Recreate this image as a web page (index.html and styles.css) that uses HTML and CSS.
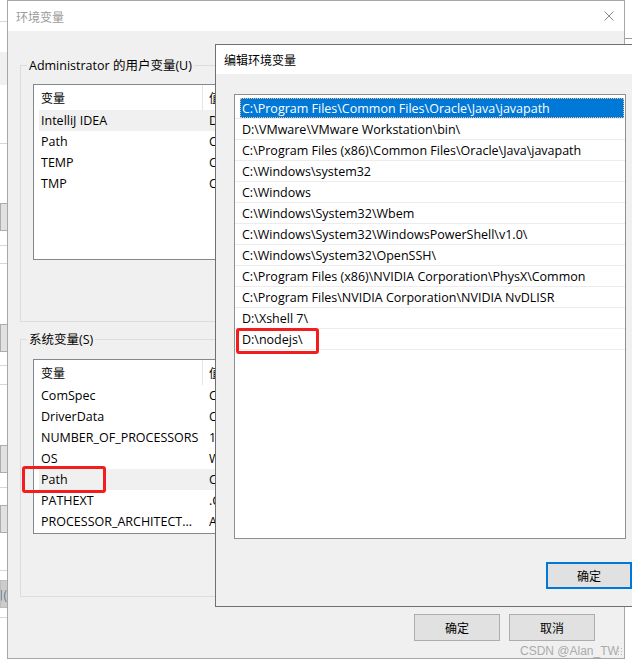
FILE: index.html
```html
<!DOCTYPE html>
<html lang="zh-CN">
<head>
<meta charset="utf-8">
<title>编辑环境变量</title>
<link rel="stylesheet" href="styles.css">
</head>
<body>
<div class="desktop">
  <div class="bg-left">
    <div class="bg-line mt-21"></div>
    <div class="bg-band mt-30"></div>
    <div class="bg-line mt-58"></div>
    <div class="bg-btn mt-59"></div>
    <div class="bg-line mt-14"></div>
    <div class="bg-line mt-17"></div>
    <div class="bg-btn mt-60"></div>
    <div class="bg-line mt-13"></div>
    <div class="bg-line mt-18"></div>
    <div class="bg-btn mt-60"></div>
    <div class="bg-line mt-14"></div>
    <div class="bg-btn mt-17"></div>
    <div class="bg-line mt-37"></div>
    <div class="bg-btn dark mt-9"><span>启用(</span></div>
    <div class="bg-line mt-9"></div>
  </div>
  <div class="bg-right-line"></div>

  <div class="win outer">
    <div class="titlebar">
      <span class="title">环境变量</span>
      <svg class="close" width="10" height="10" viewBox="0 0 10 10"><path d="M0.5 0.5L9.5 9.5M9.5 0.5L0.5 9.5" stroke="#8c8c8c" stroke-width="1" fill="none"/></svg>
    </div>
    <div class="body">
      <fieldset class="group group-user">
        <legend>Administrator 的用户变量(U)</legend>
        <div class="listview lv-user">
          <div class="lv-head"><span class="c1 cn">变量</span><span class="c2 cn">值</span></div>
          <div class="lv-row hl"><span class="c1">IntelliJ IDEA</span><span class="c2">D</span></div>
          <div class="lv-row"><span class="c1">Path</span><span class="c2">C</span></div>
          <div class="lv-row"><span class="c1">TEMP</span><span class="c2">C</span></div>
          <div class="lv-row"><span class="c1">TMP</span><span class="c2">C</span></div>
        </div>
      </fieldset>
      <fieldset class="group group-sys">
        <legend>系统变量(S)</legend>
        <div class="listview lv-sys">
          <div class="lv-head"><span class="c1 cn">变量</span><span class="c2 cn">值</span></div>
          <div class="lv-row"><span class="c1">ComSpec</span><span class="c2">C</span></div>
          <div class="lv-row"><span class="c1">DriverData</span><span class="c2">C</span></div>
          <div class="lv-row"><span class="c1">NUMBER_OF_PROCESSORS</span><span class="c2">1</span></div>
          <div class="lv-row"><span class="c1">OS</span><span class="c2">W</span></div>
          <div class="lv-row hl"><span class="c1">Path</span><span class="c2">C</span></div>
          <div class="lv-row"><span class="c1">PATHEXT</span><span class="c2">.C</span></div>
          <div class="lv-row"><span class="c1">PROCESSOR_ARCHITECT...</span><span class="c2">A</span></div>
        </div>
      </fieldset>
      <div class="btn-row">
        <button class="btn cn">确定</button>
        <button class="btn cn">取消</button>
      </div>
    </div>
  </div>

  <div class="win edit">
    <div class="titlebar"><span class="title cn">编辑环境变量</span></div>
    <div class="path-list">
      <div class="prow sel"><span class="t">C:\Program Files\Common Files\Oracle\Java\javapath</span></div>
      <div class="prow"><span class="t">D:\VMware\VMware Workstation\bin\</span></div>
      <div class="prow"><span class="t">C:\Program Files (x86)\Common Files\Oracle\Java\javapath</span></div>
      <div class="prow"><span class="t">C:\Windows\system32</span></div>
      <div class="prow"><span class="t">C:\Windows</span></div>
      <div class="prow"><span class="t">C:\Windows\System32\Wbem</span></div>
      <div class="prow"><span class="t">C:\Windows\System32\WindowsPowerShell\v1.0\</span></div>
      <div class="prow"><span class="t">C:\Windows\System32\OpenSSH\</span></div>
      <div class="prow"><span class="t">C:\Program Files (x86)\NVIDIA Corporation\PhysX\Common</span></div>
      <div class="prow"><span class="t">C:\Program Files\NVIDIA Corporation\NVIDIA NvDLISR</span></div>
      <div class="prow"><span class="t">D:\Xshell 7\</span></div>
      <div class="prow"><span class="t">D:\nodejs\</span></div>
    </div>
    <div class="edit-btns">
      <button class="btn btn-default cn">确定</button>
    </div>
  </div>

  <div class="mark mark-path"></div>
  <div class="mark mark-node"></div>
  <div class="watermark">CSDN @Alan_TW</div>
  <div class="grip"></div>
</div>
</body>
</html>
```

FILE: styles.css
```css
* { box-sizing: border-box; }
html, body { margin: 0; padding: 0; }
body {
  width: 632px;
  height: 666px;
  overflow: hidden;
  background: #ffffff;
  font-family: "Open Sans", "Noto Sans CJK SC", sans-serif;
  font-size: 12.5px;
  color: #000;
}
.cn { font-family: "Noto Sans CJK SC", sans-serif; font-size: 12px; }

.desktop { position: relative; width: 632px; height: 666px; overflow: hidden; background: #fff; }

/* background window strip on the left */
.bg-left { position: absolute; left: 0; top: 0; width: 7px; height: 666px; display: flex; flex-direction: column; }
.bg-line { flex: none; height: 1px; background: #d6d6d6; }
.bg-band { flex: none; height: 33px; background: #f0f0f0; }
.bg-btn { flex: none; height: 28px; background: #e1e1e1; border: 1px solid #adadad; border-right: none; }
.bg-btn.dark {
  background: #cccccc; border-color: #bdbdbd; overflow: hidden; white-space: nowrap;
  display: flex; justify-content: flex-end; align-items: center;
  font-family: "Noto Sans CJK SC", sans-serif; font-size: 12px; color: #6a6a6a;
}
.mt-9 { margin-top: 9px; } .mt-13 { margin-top: 13px; } .mt-14 { margin-top: 14px; }
.mt-17 { margin-top: 17px; } .mt-18 { margin-top: 18px; } .mt-21 { margin-top: 21px; }
.mt-30 { margin-top: 30px; } .mt-37 { margin-top: 37px; } .mt-58 { margin-top: 58px; }
.mt-59 { margin-top: 59px; } .mt-60 { margin-top: 60px; }
.bg-right-line { position: absolute; left: 625px; top: 38px; width: 7px; height: 1px; background: #9a9a9a; }

/* windows */
.win { position: absolute; background: #f0f0f0; display: flex; flex-direction: column; }
.outer { left: 7px; top: 0; width: 618px; height: 659px; border: 1px solid #a6a6a6; }
.outer .titlebar {
  flex: none; height: 30px; background: #fff;
  display: flex; align-items: center; justify-content: space-between;
  padding: 0 10px 0 8px;
}
.outer .title { font-family: "Noto Sans CJK SC", sans-serif; font-size: 12px; color: #9b9b9b; }
.close { display: block; }

.body { flex: 1; display: flex; flex-direction: column; }
.group {
  margin: 0 12px; padding: 0; border: 1px solid #dcdcdc; min-width: 0;
}
.group legend {
  margin-left: 6px; padding: 1px 2px 0; line-height: 16px; height: 16px;
}
.group-user { margin-top: 26px; padding-bottom: 61px; }
.group-sys { margin-top: 9px; padding-bottom: 62px; }

.listview {
  margin: 0 12px; border: 1px solid #828790; background: #fff;
  padding-left: 5px; display: flex; flex-direction: column;
}
.lv-user { margin-top: 11px; height: 176px; }
.lv-sys { margin-top: 12px; height: 175px; }
.lv-head { flex: none; height: 25px; display: flex; }
.lv-head .c1 { width: 164px; border-right: 1px solid #e5e5e5; padding-left: 2px; line-height: 25px; }
.lv-head .c2 { padding-left: 6px; line-height: 25px; }
.lv-row { flex: none; height: 21px; line-height: 21px; display: flex; white-space: nowrap; }
.lv-row.hl { background: #f0f0f0; }
.lv-row .c1 { width: 164px; padding-left: 2px; overflow: hidden; }
.lv-row .c2 { padding-left: 6px; }

.btn-row { margin-top: 17px; display: flex; justify-content: flex-end; gap: 9px; padding-right: 29px; }
.btn {
  width: 86px; height: 27px; background: #e1e1e1; border: 1px solid #adadad;
  padding: 0; color: #000; line-height: 25px;
}

/* edit dialog */
.edit { left: 215px; top: 44px; width: 440px; height: 563px; border: 1px solid #707070; }
.edit .titlebar { flex: none; height: 29px; background: #fff; display: flex; align-items: center; padding-left: 8px; }
.path-list {
  flex: none; margin: 20px 0 0 18px; width: 392px; height: 445px;
  border: 1px solid #8f8f8f; background: #fff; padding-top: 3px;
  display: flex; flex-direction: column;
}
.prow { flex: none; height: 21px; border-bottom: 1px solid #ececec; padding: 0 1px 0 5px; white-space: nowrap; }
.prow .t { display: block; height: 20px; line-height: 21px; padding-left: 2px; overflow: hidden; }
.prow.sel .t { background: #0078d7; color: #fff; outline: 1px dotted #f0c08a; outline-offset: -1px; }

.edit-btns { margin-top: 23px; padding-left: 330px; display: flex; }
.btn-default { border: 2px solid #0078d7; line-height: 23px; }

/* annotations */
.mark { position: absolute; border: 3px solid #f21d1d; border-radius: 3px; }
.mark-path { left: 22px; top: 466px; width: 84px; height: 27px; }
.mark-node { left: 236px; top: 328px; width: 83px; height: 26px; }

.watermark {
  position: absolute; left: 520px; top: 645px;
  font-family: "Liberation Sans", sans-serif; font-size: 12px; line-height: 12px; color: #ababab;
}
.grip {
  position: absolute; left: 617px; top: 647px; width: 6px; height: 9px;
  background-image: radial-gradient(circle, #b5b5b5 0.8px, transparent 1px);
  background-size: 3px 3px;
}
```
